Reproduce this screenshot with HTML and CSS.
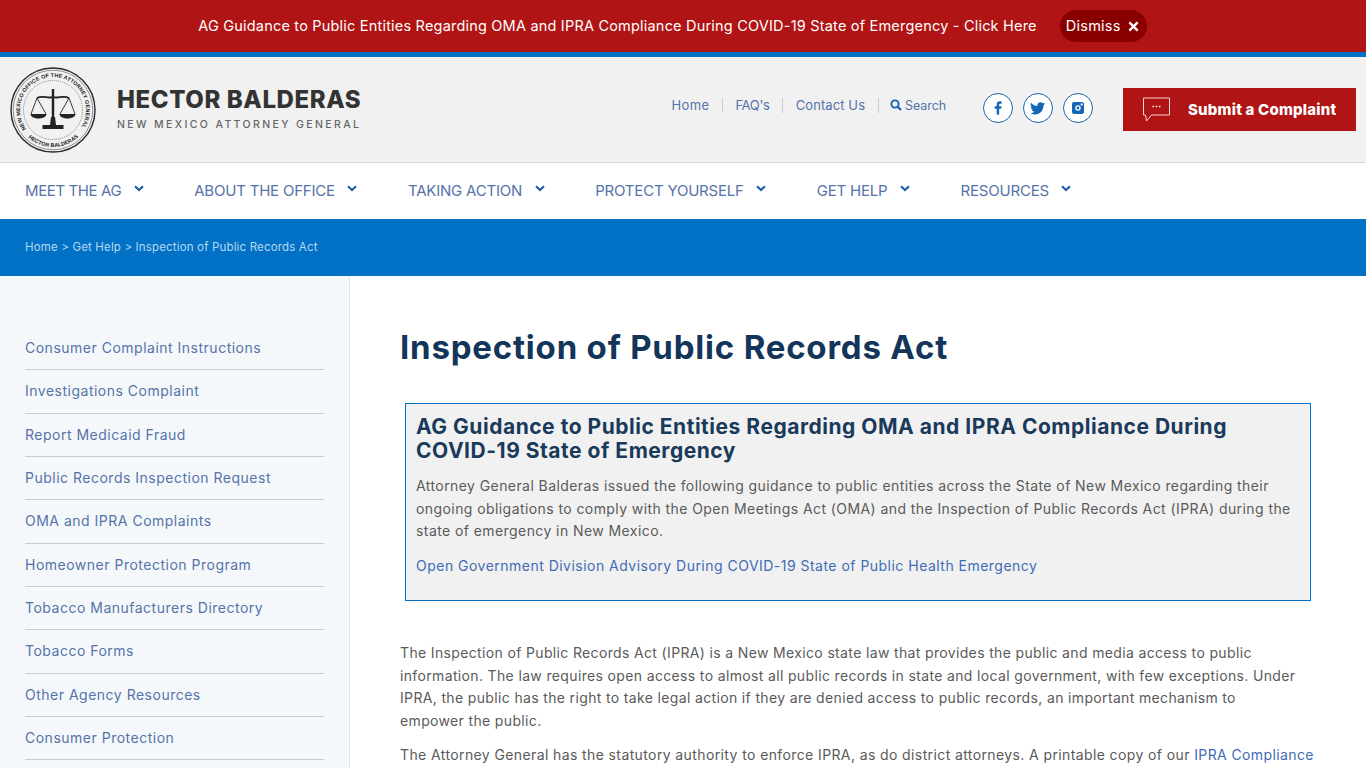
FILE: index.html
```html
<!DOCTYPE html>
<html lang="en">
<head>
<meta charset="utf-8">
<title>Inspection of Public Records Act</title>
<link rel="stylesheet" href="styles.css">
</head>
<body>
<div class="alert">
  <a class="alert-text">AG Guidance to Public Entities Regarding OMA and IPRA Compliance During COVID-19 State of Emergency - Click Here</a>
  <span class="dismiss">Dismiss <svg class="x" viewBox="0 0 12 12" width="11" height="11"><path d="M1.500 1.500 10.500 10.500M10.500 1.500 1.500 10.500" stroke="#fff" stroke-width="2.600" fill="none"/></svg></span>
</div>
<header class="header">
  <div class="brand">
    <svg class="seal" viewBox="0 0 86 86" width="86" height="86">
      <defs>
        <path id="arcTop" d="M16 62A33 33 0 1 1 70 62"/>
        <path id="arcBot" d="M14.700 66.800A37 37 0 0 0 71.300 66.800"/>
      </defs>
      <circle cx="43" cy="43" r="42" fill="#f1f1f1" stroke="#2a2a2a" stroke-width="1.400"/>
      <circle cx="43" cy="43" r="39.800" fill="none" stroke="#666" stroke-width=".7"/>
      <circle cx="43" cy="43" r="29.500" fill="none" stroke="#777" stroke-width=".9" stroke-dasharray="1 1"/>
      <text class="seal-text"><textPath href="#arcTop" textLength="141" lengthAdjust="spacing">NEW MEXICO OFFICE OF THE ATTORNEY GENERAL</textPath></text>
      <text class="seal-text"><textPath href="#arcBot" startOffset="5" textLength="55" lengthAdjust="spacing">HECTOR BALDERAS</textPath></text>
      <g fill="none" stroke="#222">
        <path d="M43 22V60" stroke-width="2.400"/>
        <path d="M27 31C33 28 38 32 43 30C48 32 53 28 59 31" stroke-width="1.800"/>
        <path d="M27 31 21 47M27 31 36 47M59 31 50 47M59 31 65 47" stroke-width=".9"/>
      </g>
      <path d="M20.500 47H36.500C36 53 21 53 20.500 47ZM49.500 47H65.500C65 53 50 53 49.500 47ZM41 50H45L46 58H53.500V62H32.500V58H40Z" fill="#222"/>
    </svg>
    <div class="brand-text">
      <div class="brand-name">HECTOR BALDERAS</div>
      <div class="brand-sub">NEW MEXICO ATTORNEY GENERAL</div>
    </div>
  </div>
  <div class="header-right">
    <nav class="top-links">
      <a class="tl-home">Home</a><i></i><a class="tl-faq">FAQ's</a><i></i><a>Contact Us</a><i></i>
      <a class="search"><svg viewBox="0 0 12 12" width="12" height="12"><circle cx="5" cy="5" r="3.600" fill="none" stroke="#1a5fb4" stroke-width="1.900"/><path d="M7.700 7.700 11 11" stroke="#1a5fb4" stroke-width="2.200"/></svg> Search</a>
    </nav>
    <div class="social">
      <span class="soc"><svg viewBox="0 0 14 14" width="16" height="16"><path d="M8 13V7.600H9.800L10.100 5.500H8V4.200C8 3.600 8.200 3.200 9 3.200H10.200V1.300C9.900 1.300 9.300 1.200 8.600 1.200 7 1.200 5.900 2.200 5.900 4V5.500H4.100V7.600H5.900V13Z" fill="#1565b5"/></svg></span>
      <span class="soc"><svg viewBox="0 0 16 16" width="16" height="16"><path d="M15 3.600C14.500 3.800 13.900 4 13.300 4.100 13.900 3.700 14.400 3.100 14.600 2.400 14 2.800 13.400 3 12.700 3.200 12.100 2.600 11.300 2.200 10.400 2.200 8.700 2.200 7.300 3.600 7.300 5.300 7.300 5.500 7.300 5.800 7.400 6 4.800 5.900 2.500 4.600 1 2.700 .7 3.200 .6 3.700 .6 4.300 .6 5.400 1.100 6.300 2 6.900 1.500 6.900 1 6.700.6 6.500V6.500C.6 8 1.700 9.300 3.100 9.600 2.600 9.700 2.100 9.700 1.700 9.600 2.100 10.900 3.200 11.700 4.600 11.800 3.200 12.800 1.600 13.300 0 13.100 1.400 14 3 14.500 4.800 14.500 10.500 14.500 13.500 9.800 13.500 5.700V5.300C14.100 4.900 14.600 4.300 15 3.600Z" fill="#1565b5"/></svg></span>
      <span class="soc"><svg viewBox="0 0 14 14" width="14" height="14"><path fill-rule="evenodd" d="M3 1H11C12.100 1 13 1.900 13 3V11C13 12.100 12.100 13 11 13H3C1.900 13 1 12.100 1 11V3C1 1.900 1.900 1 3 1ZM7 4.300A2.700 2.700 0 1 0 7 9.700 2.700 2.700 0 0 0 7 4.300ZM7 5.600A1.400 1.400 0 1 1 7 8.400 1.400 1.400 0 0 1 7 5.600ZM9.700 2.500V4.500H11.700V2.500Z" fill="#1565b5"/></svg></span>
    </div>
    <a class="complaint">
      <svg viewBox="0 0 29 25" width="29" height="25"><path d="M1.500 1H27.500V18H9.500L4.500 24 3.500 18H1.500Z" fill="none" stroke="#f6d5d5" stroke-width="1"/><path d="M10.500 9.500H12M13.700 9.500H15.200M16.900 9.500H18.400" stroke="#fff" stroke-width="1.300"/></svg>
      <span>Submit a Complaint</span>
    </a>
  </div>
</header>
<nav class="mainnav">
  <a>MEET THE AG <svg class="chev" viewBox="0 0 10 7"><path d="M1 1.200 5 5 9 1.200" /></svg></a>
  <a>ABOUT THE OFFICE <svg class="chev" viewBox="0 0 10 7"><path d="M1 1.200 5 5 9 1.200" /></svg></a>
  <a>TAKING ACTION <svg class="chev" viewBox="0 0 10 7"><path d="M1 1.200 5 5 9 1.200" /></svg></a>
  <a>PROTECT YOURSELF <svg class="chev" viewBox="0 0 10 7"><path d="M1 1.200 5 5 9 1.200" /></svg></a>
  <a>GET HELP <svg class="chev" viewBox="0 0 10 7"><path d="M1 1.200 5 5 9 1.200" /></svg></a>
  <a>RESOURCES <svg class="chev" viewBox="0 0 10 7"><path d="M1 1.200 5 5 9 1.200" /></svg></a>
</nav>
<div class="crumbs">Home &gt; Get Help &gt; Inspection of Public Records Act</div>
<div class="layout">
  <aside class="side">
    <ul>
      <li>Consumer Complaint Instructions</li>
      <li>Investigations Complaint</li>
      <li>Report Medicaid Fraud</li>
      <li>Public Records Inspection Request</li>
      <li>OMA and IPRA Complaints</li>
      <li>Homeowner Protection Program</li>
      <li>Tobacco Manufacturers Directory</li>
      <li>Tobacco Forms</li>
      <li>Other Agency Resources</li>
      <li>Consumer Protection</li>
      <li></li>
    </ul>
  </aside>
  <main class="main">
    <h1>Inspection of Public Records Act</h1>
    <section class="box">
      <h2>AG Guidance to Public Entities Regarding OMA and IPRA Compliance During COVID-19 State of Emergency</h2>
      <p>Attorney General Balderas issued the following guidance to public entities across the State of New Mexico regarding their ongoing obligations to comply with the Open Meetings Act (OMA) and the Inspection of Public Records Act (IPRA) during the state of emergency in New Mexico.</p>
      <p><a>Open Government Division Advisory During COVID-19 State of Public Health Emergency</a></p>
    </section>
    <p>The Inspection of Public Records Act (IPRA) is a New Mexico state law that provides the public and media access to public information. The law requires open access to almost all public records in state and local government, with few exceptions. Under IPRA, the public has the right to take legal action if they are denied access to public records, an important mechanism to<br>empower the public.</p>
    <p class="last">The Attorney General has the statutory authority to enforce IPRA, as do district attorneys. A printable copy of our <a>IPRA Compliance</a></p>
  </main>
</div>
</body>
</html>
```
FILE: styles.css
```css
* { box-sizing: border-box; }
html, body { margin: 0; height: 768px; overflow: hidden; }
body { font-family: Inter, "Open Sans", sans-serif; background: #fff; color: #444; }
a { color: inherit; text-decoration: none; }

.alert { height: 57px; background: #b01414; border-bottom: 5px solid #0071c5; display: flex; align-items: center; justify-content: center; gap: 23px; color: #fff; font-size: 14.500px; padding-right: 21px; }
.alert-text { letter-spacing: .2px; margin-top: -2px; }
.dismiss { height: 32px; width: 87px; padding: 0 8px 2px 6px; background: #8a0000; border-radius: 16px; display: flex; align-items: center; justify-content: space-between; font-size: 14.500px; letter-spacing: .25px; }
.x { margin-top: 2px; }

.header { height: 106px; background: #f1f1f1; border-bottom: 1px solid #d8d8d8; display: flex; justify-content: space-between; align-items: center; padding: 0 10px; }
.brand { display: flex; align-items: center; gap: 21px; margin-top: 1px; }
.seal-text { font: 700 5.400px "Liberation Sans", sans-serif; fill: #222; }
.brand-name { font-size: 24px; font-weight: 800; color: #333; line-height: 28px; letter-spacing: .6px; margin: -1px 0 3px; }
.brand-sub { font-size: 10.500px; font-weight: 500; color: #666; letter-spacing: 2.380px; line-height: 16px; }
.header-right { display: flex; align-items: center; }
.top-links { display: flex; align-items: center; gap: 12.500px; color: #5573a8; font-size: 13px; letter-spacing: .1px; margin-top: -9px; }
.top-links i { width: 1px; height: 15px; background: #ccc; }
.tl-home { letter-spacing: .4px; }
.tl-faq { letter-spacing: -.3px; }
.search { display: flex; align-items: center; gap: 3px; font-size: 12.500px; letter-spacing: -.1px; margin-left: -1px; }
.social { display: flex; gap: 10px; margin-left: 37px; margin-top: -3px; }
.soc { width: 30px; height: 30px; border: 1px solid #1565b5; border-radius: 50%; background: #fff; display: flex; align-items: center; justify-content: center; }
.complaint { width: 233px; height: 43px; margin-left: 30px; background: #b01414; color: #fff; font-weight: 800; font-size: 15px; letter-spacing: .2px; display: flex; align-items: center; gap: 17px; padding-left: 19px; }

.mainnav { height: 56px; display: flex; align-items: center; padding: 0 0 2px 25px; gap: 50.500px; color: #5573a8; font-size: 15px; letter-spacing: -.2px; background: #fff; }
.mainnav a { display: flex; align-items: center; gap: 12.500px; }
.mainnav a:first-child { letter-spacing: -.4px; }
.chev { width: 10px; height: 7px; margin-top: -4px; fill: none; stroke: #1e5aa8; stroke-width: 2; }

.crumbs { height: 57px; background: #0071c5; color: #b5d8f2; font-size: 11.500px; letter-spacing: .16px; display: flex; align-items: center; padding: 0 0 2px 25px; }

.layout { display: flex; }
.side { width: 350px; height: 600px; background: #f5f8fb; border-right: 1px solid #e3e6e9; padding: 50.900px 25px 0; flex: none; }
.side ul { list-style: none; margin: 0; padding: 0; }
.side li { height: 43.350px; padding-top: 12.200px; border-bottom: 1px solid #c9ccd1; color: #5573a8; font-size: 14px; letter-spacing: .5px; }

.main { padding: 49px 50px 0; flex: 1; font-size: 14px; line-height: 22.500px; letter-spacing: .35px; color: #5a5a5a; }
.main a { color: #3f6cb4; }
h1 { margin: 0 0 34px; font-size: 33px; font-weight: 700; line-height: 44px; color: #13355a; letter-spacing: .8px; }
.box { width: 906px; height: 198px; margin: 0 0 41px 5px; padding: 11px 10px 10px; background: #f1f1f1; border: 1px solid #0071c5; letter-spacing: .42px; }
.box h2 { margin: 0 0 12px; font-size: 21px; line-height: 24px; font-weight: 700; color: #1a3a5c; letter-spacing: .52px; }
.box a { letter-spacing: .48px; }
p { margin: 0 0 12px; }
.last { letter-spacing: .39px; white-space: nowrap; }
```
